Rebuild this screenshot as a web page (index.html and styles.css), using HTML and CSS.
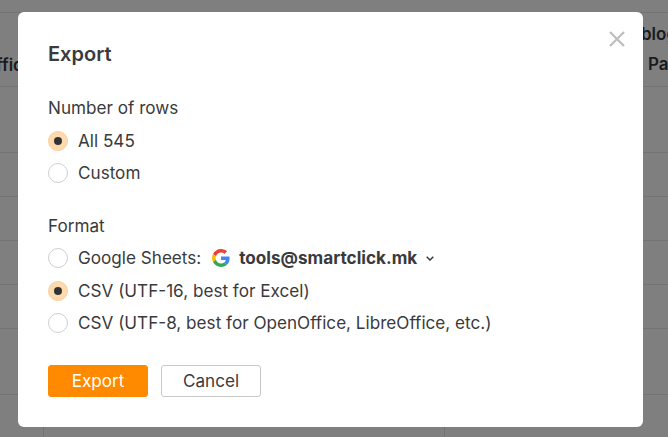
FILE: index.html
```html
<!DOCTYPE html>
<html lang="en">
<head>
<meta charset="utf-8">
<title>Export</title>
<link rel="stylesheet" href="styles.css">
</head>
<body>
<div class="table">
  <div class="row top"></div>
  <div class="row head">
    <div class="head-left"><span>ffic</span></div>
    <div class="head-right"><span class="blog">blog</span><span class="pa">Pa</span></div>
  </div>
  <div class="row r66"></div>
  <div class="row r44"></div>
  <div class="row r44"></div>
  <div class="row r44"></div>
  <div class="row r44"></div>
  <div class="row r66"></div>
  <div class="row last"><i class="vline v1"></i><i class="vline v2"></i></div>
</div>
<div class="modal">
  <svg class="close" viewBox="0 0 16 16" width="16" height="16" aria-hidden="true"><path d="M1 1L15 15M15 1L1 15"/></svg>
  <h1>Export</h1>
  <section class="group first">
    <div class="label">Number of rows</div>
    <div class="option"><span class="radio on"></span><span>All 545</span></div>
    <div class="option"><span class="radio"></span><span>Custom</span></div>
  </section>
  <section class="group second">
    <div class="label">Format</div>
    <div class="option"><span class="radio"></span><span>Google Sheets:</span>
      <svg class="google" viewBox="0 0 48 48" width="18" height="18" aria-hidden="true">
        <path fill="#EA4335" d="M24 9.500c3.500 0 6.700 1.200 9.200 3.600l6.900-6.900C35.900 2.400 30.500 0 24 0 14.600 0 6.500 5.400 2.600 13.200l8 6.200C12.500 13.700 17.800 9.500 24 9.500z"/>
        <path fill="#4285F4" d="M47 24.500c0-1.600-.1-3.100-.4-4.500H24v9h12.900c-.6 3-2.200 5.500-4.700 7.200l7.700 6C44.400 38 47 31.800 47 24.500z"/>
        <path fill="#FBBC05" d="M10.500 28.600c-.5-1.400-.8-3-.8-4.600s.3-3.200.8-4.600l-8-6.200C.9 16.500 0 20.100 0 24s.9 7.500 2.600 10.800l7.900-6.200z"/>
        <path fill="#34A853" d="M24 48c6.500 0 11.900-2.100 15.900-5.800l-7.700-6c-2.100 1.400-4.900 2.300-8.200 2.300-6.200 0-11.500-4.200-13.400-9.900l-8 6.200C6.500 42.600 14.600 48 24 48z"/>
      </svg>
      <strong>tools@smartclick.mk</strong>
      <svg class="chev" viewBox="0 0 8 5" width="8" height="5" aria-hidden="true"><path d="M.7.7L4 4 7.300.7"/></svg>
    </div>
    <div class="option"><span class="radio on"></span><span>CSV (UTF-16, best for Excel)</span></div>
    <div class="option"><span class="radio"></span><span>CSV (UTF-8, best for OpenOffice, LibreOffice, etc.)</span></div>
  </section>
  <div class="actions">
    <button class="btn primary">Export</button>
    <button class="btn">Cancel</button>
  </div>
</div>
</body>
</html>
```
FILE: styles.css
```css
* { box-sizing: border-box; }
html, body { margin: 0; padding: 0; height: 100%; }
body {
  width: 668px;
  height: 437px;
  overflow: hidden;
  background: #7f7f7f;
  font-family: Inter, "Liberation Sans", sans-serif;
  color: #3a3a3c;
  position: relative;
}
.table { display: flex; flex-direction: column; }
.row { border-bottom: 1px solid #737373; flex: none; }
.top { height: 13px; }
.head { height: 74px; display: flex; justify-content: space-between; font-weight: 600; font-size: 17px; color: #1a1a1c; }
.r66 { height: 66px; }
.r44 { height: 44px; }
.last { height: 43px; border-bottom: 0; position: relative; }
.head-left { width: 23px; display: flex; justify-content: flex-end; padding-top: 42px; white-space: nowrap; line-height: 20px; }
.head-right { width: 28px; display: flex; flex-direction: column; white-space: nowrap; line-height: 20px; padding-top: 11px; }
.blog { margin-left: 1px; }
.pa { margin-top: 10px; margin-left: 8px; }
.vline { position: absolute; top: 0; bottom: 0; width: 1px; background: #737373; }
.v1 { left: 43px; }
.v2 { left: 444px; }
.modal {
  position: absolute;
  left: 18px;
  top: 12px;
  width: 625px;
  height: 415px;
  background: #fff;
  border-radius: 6px;
  padding: 30px;
}
.close { position: absolute; left: 591px; top: 19px; fill: none; stroke: #bdbdbd; stroke-width: 2.2; }
h1 { margin: 0; font-size: 20px; line-height: 24px; font-weight: 600; color: #3a3a3c; }
.group { display: flex; flex-direction: column; }
.first { margin-top: 30px; }
.second { margin-top: 24px; }
.label { font-size: 17.14px; line-height: 24px; margin-bottom: 4.5px; }
.option { display: flex; align-items: center; height: 32.5px; font-size: 17.14px; line-height: 24px; }
.radio { width: 20px; height: 20px; border-radius: 50%; border: 1px solid #cfcfcf; background: #fff; margin-right: 10px; flex: none; display: flex; align-items: center; justify-content: center; }
.radio.on { background: #fdd9ae; border-color: #fbcf9d; }
.radio.on::after { content: ""; width: 8px; height: 8px; border-radius: 50%; background: #333336; }
.google { margin-left: 11px; flex: none; }
strong { font-weight: 700; margin-left: 9px; }
.chev { margin-left: 9px; fill: none; stroke: #3a3a3c; stroke-width: 1.5; }
.actions { display: flex; gap: 13px; margin-top: 25.5px; }
.btn { width: 100px; height: 32px; font: 400 17.14px/24px Inter, "Liberation Sans", sans-serif; color: #3a3a3c; background: #fff; border: 1px solid #c9c9c9; border-radius: 3px; padding: 0; }
.primary { color: #fff; background: #ff8a00; border-color: #ff8a00; }
```
